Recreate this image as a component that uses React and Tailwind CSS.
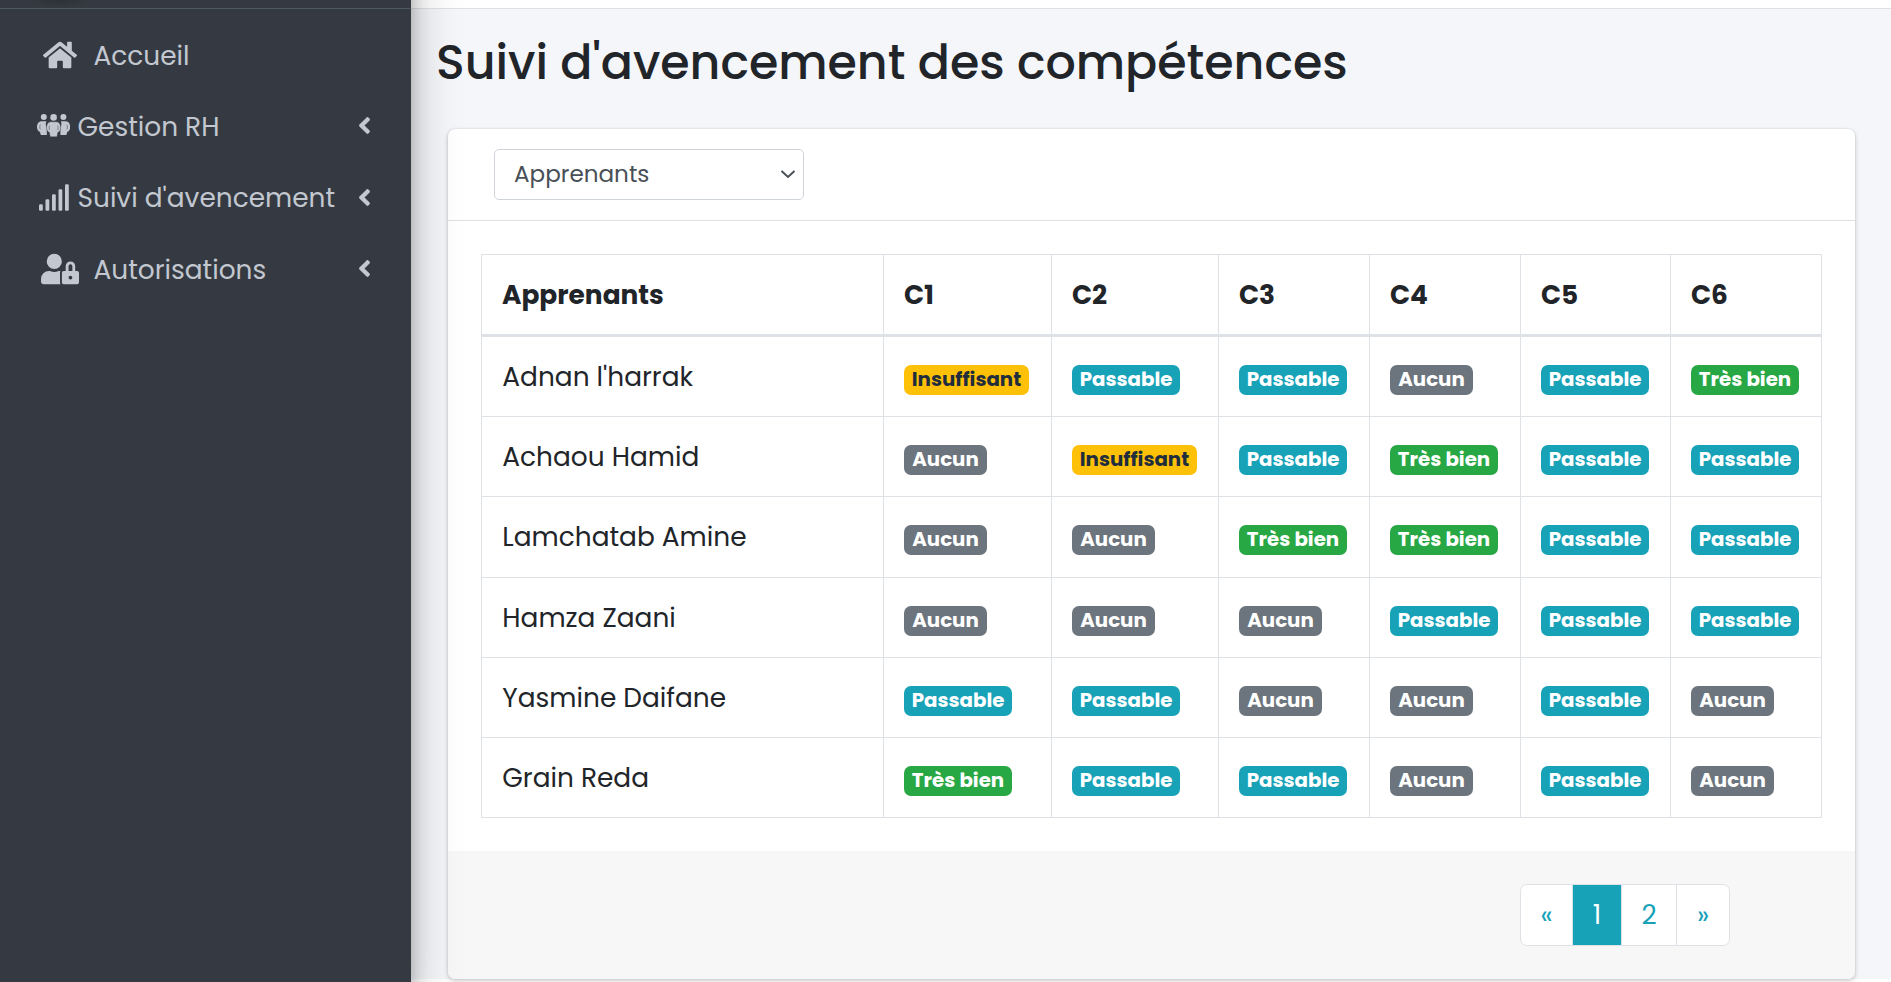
import { FaHome, FaUserLock, FaAngleLeft } from "react-icons/fa";

const LEVELS = {
  I: { label: "Insuffisant", cls: "bg-[#ffc107] text-[#1f2d3d] w-[125px]" },
  P: { label: "Passable", cls: "bg-[#17a2b8] text-white w-[108.3px]" },
  A: { label: "Aucun", cls: "bg-[#6c757d] text-white w-[83px]" },
  T: { label: "Très bien", cls: "bg-[#28a745] text-white w-[108px]" },
};

const ROWS = [
  ["Adnan l'harrak", "IPPAPT"],
  ["Achaou Hamid", "AIPTPP"],
  ["Lamchatab Amine", "AATTPP"],
  ["Hamza Zaani", "AAAPPP"],
  ["Yasmine Daifane", "PPAAPA"],
  ["Grain Reda", "TPPAPA"],
];

function GroupIcon({ className }) {
  return (
    <svg viewBox="0 0 33 23" className={className} fill="currentColor">
      <circle cx="6.8" cy="3" r="3" />
      <circle cx="26.4" cy="3" r="3" />
      <path d="M5 7.300h4.400c-1 2-.8 4 .4 6.400v7.300H3.800L3 18C1 17 0 15.500 0 13c0-3 1.500-5.700 5-5.700z" />
      <path d="M28.200 7.300h-4.400c1 2 .8 4-.4 6.400v7.300h6l.8-3c2-1 3-2.500 3-5 0-3-1.500-5.700-5-5.700z" />
      <circle cx="16.600" cy="3.400" r="3.300" />
      <path
        d="M14 7.800h5.200c3 0 4.400 2.700 4.400 5.700 0 2.500-1 4.200-2.800 5L20 22.800h-6.800l-.8-4.300c-1.800-.8-2.800-2.500-2.800-5 0-3 1.400-5.700 4.400-5.700z"
        stroke="#353a42"
        strokeWidth="0.4"
      />
      <path
        d="M3.300 10.500c-.7 1.500-.7 3.500 0 5M29.900 10.500c.7 1.500.7 3.500 0 5M12.600 11.500c-.6 1.500-.6 3 0 4.500M20.600 11.500c.6 1.500.6 3 0 4.500"
        fill="none"
        stroke="#353a42"
        strokeOpacity="0.55"
        strokeWidth="0.9"
      />
    </svg>
  );
}

function SignalIcon({ className }) {
  return (
    <svg viewBox="0 0 31 27" className={className} fill="currentColor">
      <rect x="0" y="20.300" width="3.800" height="6.400" rx="1.300" />
      <rect x="6.500" y="15.300" width="3.800" height="11.400" rx="1.300" />
      <rect x="13" y="10.300" width="3.800" height="16.400" rx="1.300" />
      <rect x="19.500" y="5.300" width="3.800" height="21.400" rx="1.300" />
      <rect x="26" y="0.300" width="3.800" height="26.400" rx="1.300" />
    </svg>
  );
}

function NavItem({ icon, label, textClass, arrow }) {
  return (
    <li className="flex h-[71.3px] items-center text-[#c2c7d0]">
      <span className="flex shrink-0 items-center">{icon}</span>
      <span className={"pt-[2px] whitespace-nowrap " + textClass}>{label}</span>
      {arrow && <FaAngleLeft className="mr-[33px] ml-auto size-[27px]" />}
    </li>
  );
}

export default function App() {
  return (
    <div className="flex h-[982px] w-full overflow-hidden bg-white font-[Poppins,Inter,sans-serif] text-[26.4px] text-[#212529]">
      <aside className="relative z-10 -mt-[80px] w-[411px] shrink-0 bg-[#353a42] pt-[80px] shadow-[0_23px_46px_rgba(0,0,0,0.25),0_16px_16px_rgba(0,0,0,0.22)]">
        <div className="h-[9px] border-b border-[#4f5962] bg-[radial-gradient(ellipse_34px_12px_at_60px_-4px,#2a2e31,#353a42)]" />
        <ul className="pt-[10px]">
          <NavItem icon={<FaHome className="ml-[43px] size-[34px]" />} label="Accueil" textClass="ml-[16.5px]" />
          <NavItem icon={<GroupIcon className="ml-[37px] h-[23px] w-[33px]" />} label="Gestion RH" textClass="ml-[7.5px]" arrow />
          <NavItem icon={<SignalIcon className="ml-[38.5px] h-[27px] w-[31px]" />} label="Suivi d'avencement" textClass="ml-[8px]" arrow />
          <NavItem icon={<FaUserLock className="ml-[41px] size-[38px]" />} label="Autorisations" textClass="ml-[14.5px]" arrow />
        </ul>
      </aside>

      <main className="flex h-[979px] min-w-0 flex-1 flex-col bg-[#f4f6f9]">
        <div className="h-[9px] shrink-0 border-b border-[#dee2e6] bg-white" />
        <h1 className="h-[120px] shrink-0 pt-[25px] pl-[25px] text-[47.5px] leading-[57px] font-medium">
          Suivi d'avencement des compétences
        </h1>
        <section className="ml-[37px] flex h-[850px] w-[1407px] shrink-0 flex-col overflow-hidden rounded-[7px] bg-white shadow-[0_0_2px_rgba(0,0,0,0.13),0_2px_5px_rgba(0,0,0,0.2)]">
          <div className="h-[92px] shrink-0 border-b border-[#dfdfdf] pt-[20px] pl-[46px]">
            <div className="flex h-[51px] w-[310px] items-center justify-between rounded-[5px] border border-[#ced4da] pr-[7px] pl-[19px] text-[23.1px] text-[#495057]">
              <span>Apprenants</span>
              <svg viewBox="0 0 16 10" className="h-[10px] w-[16px]" fill="none" stroke="currentColor" strokeWidth="2">
                <path d="M1.500 1l6.500 6 6.500-6" />
              </svg>
            </div>
          </div>

          <div className="h-[630px] shrink-0 pt-[33px] pl-[33px]">
            <div className="grid w-[1341px] grid-cols-[402px_168px_167px_151px_151px_150px_151px] grid-rows-[82px_80px_80px_81px_80px_80px_80px] border-t border-l border-[#dee2e6]">
              {["Apprenants", "C1", "C2", "C3", "C4", "C5", "C6"].map((h) => (
                <div key={h} className="flex items-center border-r border-b-[3px] border-[#dee2e6] pl-[20px] font-bold">
                  {h}
                </div>
              ))}
              {ROWS.map(([name, marks]) => [
                <div key={name} className="flex items-center border-r border-b border-[#dee2e6] pl-[20.3px]">
                  {name}
                </div>,
                ...marks.split("").map((m, i) => (
                  <div key={name + i} className="flex items-center border-r border-b border-[#dee2e6] pt-[6px] pl-[20px]">
                    <span className={"flex h-[30px] items-center justify-center rounded-[7px] text-[19.8px] font-bold " + LEVELS[m].cls}>
                      {LEVELS[m].label}
                    </span>
                  </div>
                )),
              ])}
            </div>
          </div>

          <div className="flex-1 bg-[#f7f7f7] pt-[33px] pl-[1072px]">
            <div className="flex h-[62px] w-[210px] overflow-hidden rounded-[7px] border border-[#dee2e6] bg-white text-[#17a2b8]">
              <span className="flex w-[52px] items-center justify-center border-r border-[#dee2e6]">«</span>
              <span className="flex w-[49px] items-center justify-center border-r border-[#dee2e6] bg-[#17a2b8] text-white">1</span>
              <span className="flex w-[55px] items-center justify-center border-r border-[#dee2e6]">2</span>
              <span className="flex flex-1 items-center justify-center">»</span>
            </div>
          </div>
        </section>
      </main>
    </div>
  );
}
